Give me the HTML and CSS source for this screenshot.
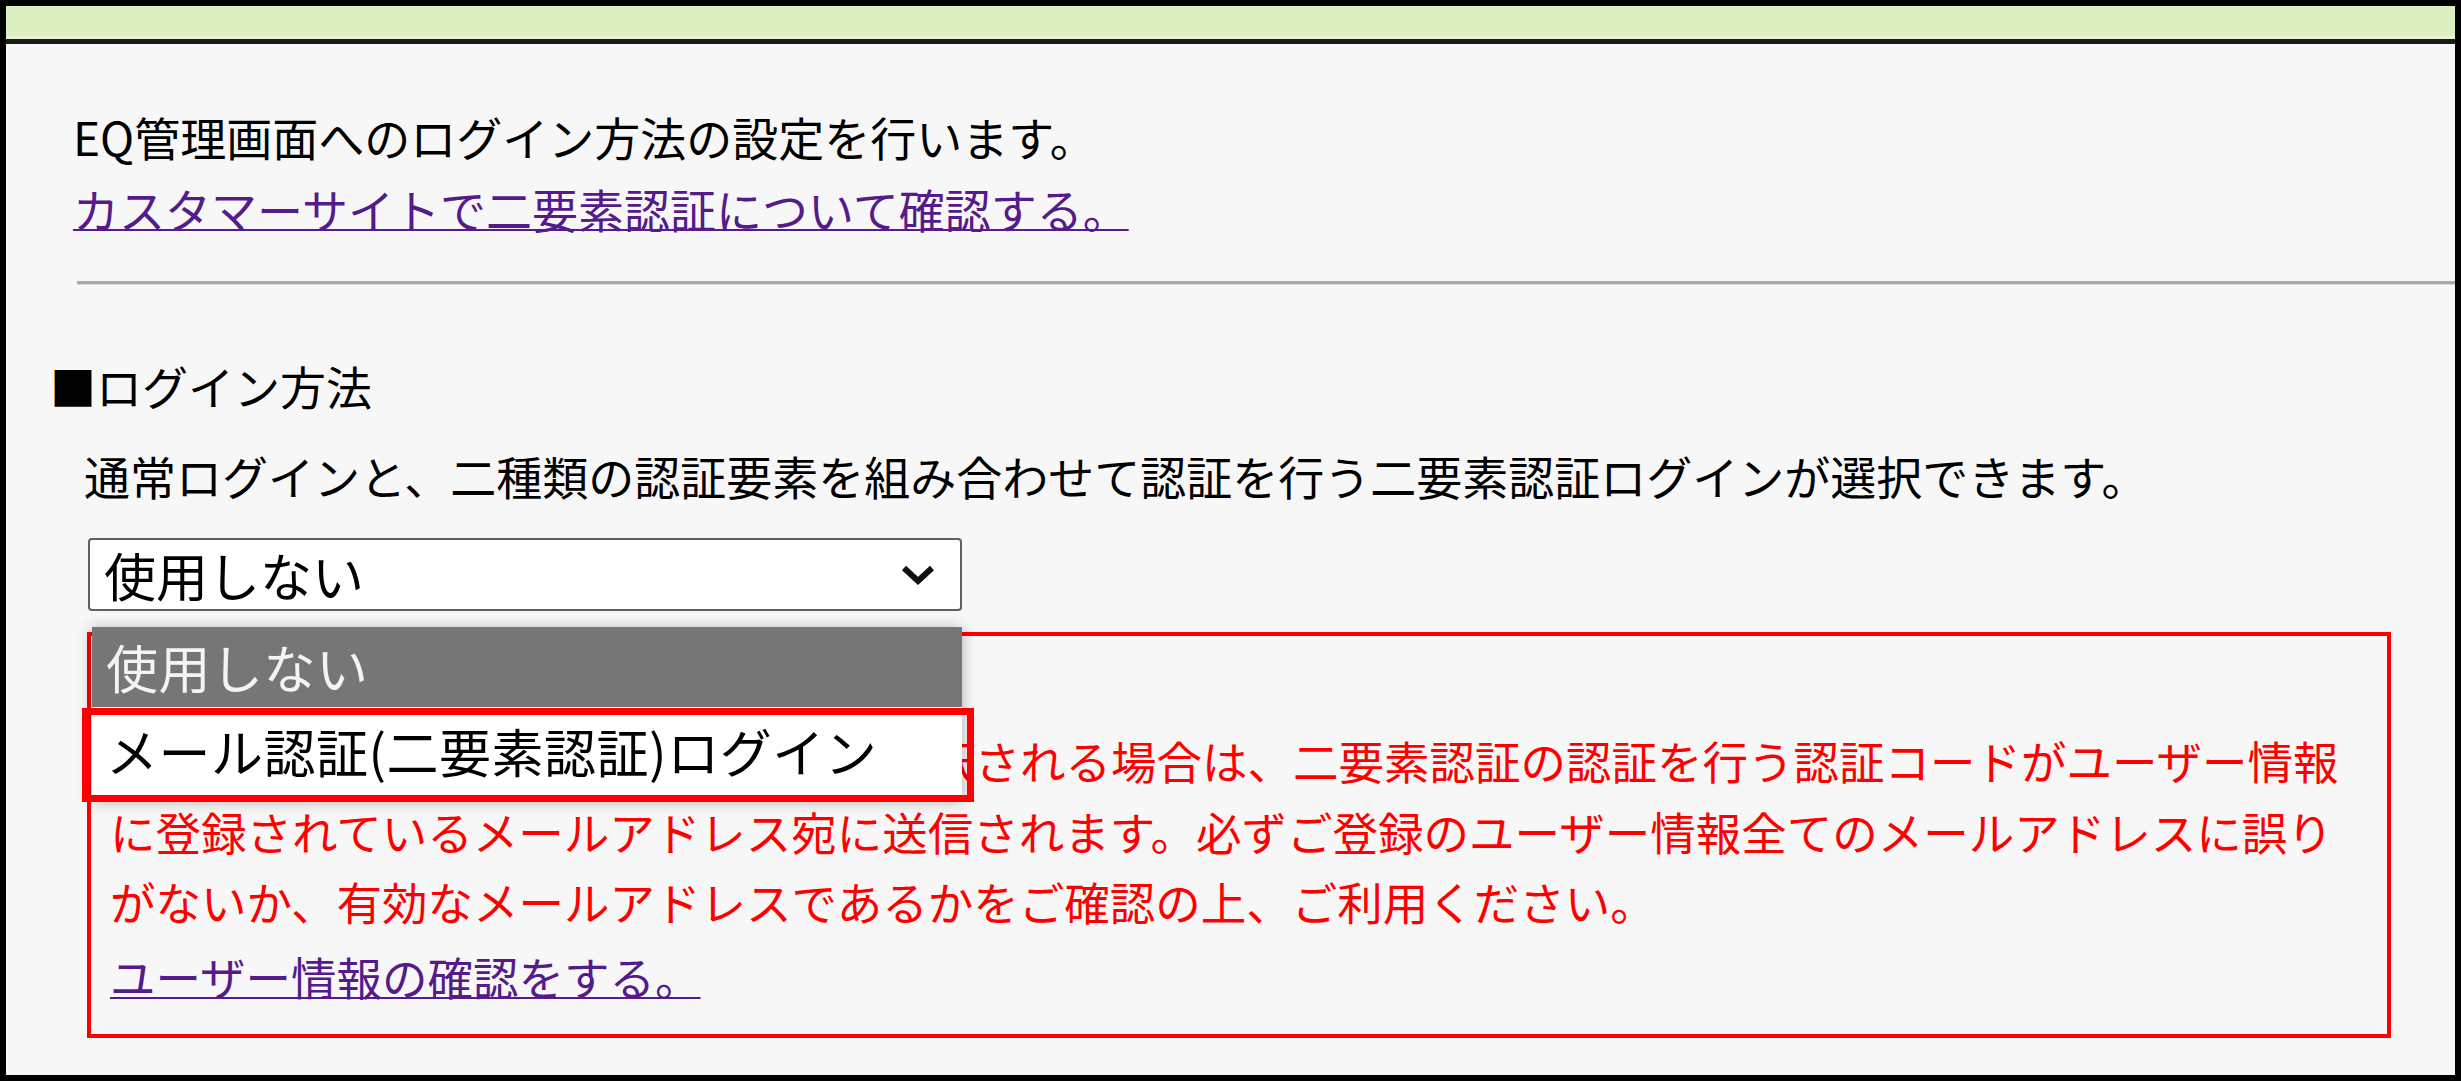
FILE: index.html
```html
<!doctype html>
<html lang="ja">
<head>
    <meta charset="utf-8">
    <meta name="viewport" content="width=device-width, initial-scale=1">
    <title>ログイン方法の設定</title>
    <link rel="stylesheet" href="styles.css">
</head>
<body>
    <div class="frame">
        <div class="title-bar"></div>

        <main class="content">
            <p class="lead">EQ管理画面へのログイン方法の設定を行います。<br>
                <a href="#">カスタマーサイトで二要素認証について確認する。</a></p>

            <hr class="divider">

            <section class="login-method">
                <h2 class="section-title">■ログイン方法</h2>
                <p class="note">通常ログインと、二種類の認証要素を組み合わせて認証を行う二要素認証ログインが選択できます。</p>

                <div class="select-field">
                    <div class="select-box">
                        <span>使用しない</span>
                        <svg class="chevron" width="36" height="22" viewBox="0 0 36 22">
                            <polyline points="4,4 18,17 32,4" fill="none" stroke="#111" stroke-width="6" stroke-linejoin="miter"/>
                        </svg>
                    </div>

                    <ul class="select-menu">
                        <li class="option option-current">使用しない</li>
                        <li class="option">メール認証(二要素認証)ログイン<span class="highlight"></span></li>
                    </ul>
                </div>

                <div class="warning">
                    <p>メール認証（二要素認証）ログインを選択される場合は、二要素認証の認証を行う認証コードがユーザー情報<br>
                        に登録されているメールアドレス宛に送信されます。必ずご登録のユーザー情報全てのメールアドレスに誤り<br>
                        がないか、有効なメールアドレスであるかをご確認の上、ご利用ください。</p>
                    <p class="warning-link"><a href="#">ユーザー情報の確認をする。</a></p>
                </div>
            </section>
        </main>
    </div>
</body>
</html>
```

FILE: styles.css
```css
/*
 * Reset
 */

*,
*::before,
*::after {
    box-sizing: border-box;
    margin: 0;
    padding: 0;
}

body {
    background-color: #000;
    color: #000;
    font-family: "Noto Sans CJK JP", sans-serif;
    font-size: 46px;
    line-height: 72px;
}

a {
    color: #551a8b;
    text-decoration-thickness: 2px;
}

/*
 * Window frame
 */

.frame {
    background-color: #f7f7f7;
    border: 6px solid #000;
    height: 1081px;
    overflow: hidden;
}

.title-bar {
    background-color: #dbefc3;
    border-bottom: 5px solid #1a1a1a;
    box-shadow: inset 0 -3px 0 #e6f5d6;
    height: 38px;
}

.content {
    padding-top: 56px;
}

.lead {
    margin-left: 67px;
}

.divider {
    border: 0;
    border-top: 3px solid #a9a9a9;
    box-shadow: 0 1px 0 #d6d6d6;
    margin: 37px 0 0 71px;
}

/*
 * Login method
 */

.section-title {
    font-size: 46px;
    font-weight: normal;
    margin: 65px 0 0 44px;
}

.note {
    margin: 18px 0 0 78px;
}

.select-field {
    margin: 27px 0 0 82px;
    position: relative;
    width: 874px;
}

.select-box {
    align-items: center;
    background-color: #fff;
    border: 2px solid #5f5f5f;
    border-radius: 4px;
    display: flex;
    font-size: 52px;
    height: 73px;
    justify-content: space-between;
    line-height: 1;
    padding: 0 24px 0 14px;
}

.chevron {
    display: block;
}

.select-menu {
    background-color: #fff;
    box-shadow: 0 2px 14px rgba(0, 0, 0, 0.3);
    font-size: 52px;
    left: 4px;
    list-style: none;
    padding-bottom: 4px;
    position: absolute;
    top: 89px;
    width: 870px;
    z-index: 2;
}

.option {
    align-items: center;
    display: flex;
    height: 88px;
    letter-spacing: 0.5px;
    line-height: 1;
    padding-left: 14px;
    position: relative;
}

.option-current {
    background-color: #767676;
    color: #f4f4f4;
    height: 80px;
}

.highlight {
    border: 7px solid #ff0000;
    bottom: -7px;
    left: -10px;
    position: absolute;
    right: -12px;
    top: 1px;
}

/*
 * Notice box
 */

.warning {
    border: 4px solid #ff0000;
    color: #ff0000;
    font-size: 45.5px;
    line-height: 70.5px;
    margin: 21px 64px 0 81px;
    padding: 89px 0 23px 19px;
}

.warning-link {
    margin-top: 4px;
}
```
